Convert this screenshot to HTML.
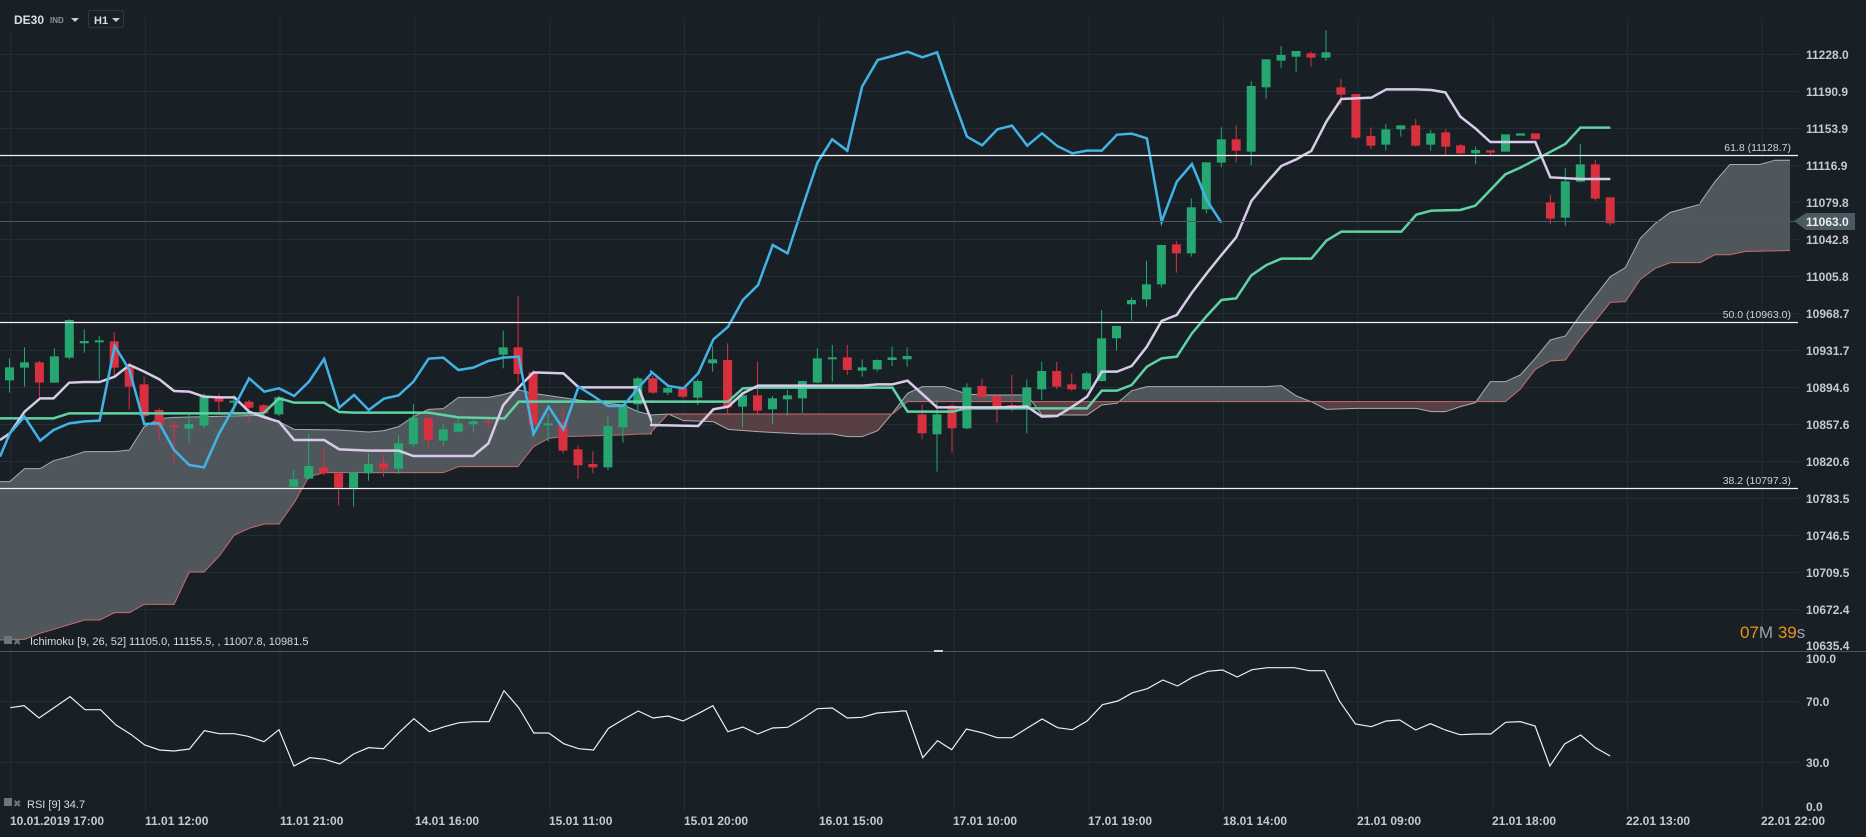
<!DOCTYPE html>
<html><head><meta charset="utf-8"><style>
html,body{margin:0;padding:0;background:#182026;overflow:hidden}
svg{display:block}
text{font-family:"Liberation Sans",sans-serif}
.ax{fill:#c5cacd;font-size:12px;font-weight:bold}
.tm{fill:#c5cacd;font-size:12px;font-weight:bold}
.ns{vector-effect:non-scaling-stroke;fill:none}
</style></head><body>
<svg width="1866" height="837" xmlns="http://www.w3.org/2000/svg">
<defs>
<clipPath id="c3"><rect x="0" y="0" width="652" height="652"/></clipPath>
<clipPath id="c4"><rect x="650" y="0" width="652" height="652"/></clipPath>
<clipPath id="c5"><rect x="1300" y="0" width="400" height="652"/></clipPath>
<clipPath id="c1"><rect x="1700" y="0" width="92" height="652"/></clipPath>
<clipPath id="main"><rect x="0" y="0" width="1866" height="651"/></clipPath>
<!-- zoom3 clips -->
<clipPath id="b3"><polygon points="0,605 22,605 55,566 90,566 120,542 155,530 190,515 257,515 290,510 323,440 357,416 390,412 590,406 625,425 659,448 760,450 826,456 860,452 893,440 926,410 960,388 993,386 1027,352 1094,352 1127,344 1162,330 1195,340 1296,360 1396,375 1430,395 1464,407 1497,403 1530,425 1568,425 1568,1300 0,1300"/></clipPath>
<clipPath id="a3"><polygon points="0,605 22,605 55,566 90,566 120,542 155,530 190,515 257,515 290,510 323,440 357,416 390,412 590,406 625,425 659,448 760,450 826,456 860,452 893,440 926,410 960,388 993,386 1027,352 1094,352 1127,344 1162,330 1195,340 1296,360 1396,375 1430,395 1464,407 1497,403 1530,425 1568,425 1568,-900 0,-900"/></clipPath>
<clipPath id="b4"><polygon points="0,1185 41,1182 75,1202 142,1205 175,1228 242,1235 342,1242 408,1242 442,1250 475,1250 510,1232 543,1180 577,1120 610,1100 660,1100 710,1122 744,1125 845,1125 878,1185 979,1185 1012,1155 1046,1150 1079,1112 1113,1100 1380,1100 1414,1097 1448,1128 1481,1145 1515,1168 1568,1168 1568,2100 0,2100"/></clipPath>
<clipPath id="a4"><polygon points="0,1185 41,1182 75,1202 142,1205 175,1228 242,1235 342,1242 408,1242 442,1250 475,1250 510,1232 543,1180 577,1120 610,1100 660,1100 710,1122 744,1125 845,1125 878,1185 979,1185 1012,1155 1046,1150 1079,1112 1113,1100 1380,1100 1414,1097 1448,1128 1481,1145 1515,1168 1568,1168 1568,-100 0,-100"/></clipPath>
<clipPath id="b5"><polygon points="0,1100 154,1100 199,1097 244,1097 289,1128 334,1145 379,1168 469,1165 649,1165 694,1175 736,1175 781,1160 826,1148 871,1085 916,1085 961,1065 1006,1015 1051,960 1096,948 1141,885 1186,828 1231,770 1276,743 1321,655 1366,610 1411,577 1500,553 1500,2100 0,2100"/></clipPath>
<clipPath id="a5"><polygon points="0,1100 154,1100 199,1097 244,1097 289,1128 334,1145 379,1168 469,1165 649,1165 694,1175 736,1175 781,1160 826,1148 871,1085 916,1085 961,1065 1006,1015 1051,960 1096,948 1141,885 1186,828 1231,770 1276,743 1321,655 1366,610 1411,577 1500,553 1500,-100 0,-100"/></clipPath>
</defs>

<!-- grid -->
<g stroke="#222d34" stroke-width="1">
<line x1="0" y1="54.5" x2="1798" y2="54.5"/><line x1="0" y1="91.5" x2="1798" y2="91.5"/><line x1="0" y1="128.5" x2="1798" y2="128.5"/><line x1="0" y1="165.5" x2="1798" y2="165.5"/><line x1="0" y1="202.5" x2="1798" y2="202.5"/><line x1="0" y1="239.5" x2="1798" y2="239.5"/><line x1="0" y1="276.5" x2="1798" y2="276.5"/><line x1="0" y1="313.5" x2="1798" y2="313.5"/><line x1="0" y1="350.5" x2="1798" y2="350.5"/><line x1="0" y1="387.5" x2="1798" y2="387.5"/><line x1="0" y1="424.5" x2="1798" y2="424.5"/><line x1="0" y1="461.5" x2="1798" y2="461.5"/><line x1="0" y1="498.5" x2="1798" y2="498.5"/><line x1="0" y1="535.5" x2="1798" y2="535.5"/><line x1="0" y1="572.5" x2="1798" y2="572.5"/><line x1="0" y1="609.5" x2="1798" y2="609.5"/>
<line x1="0" y1="701.5" x2="1798" y2="701.5"/><line x1="0" y1="762.5" x2="1798" y2="762.5"/>
<line x1="11" y1="32" x2="11" y2="812"/><line x1="145.5" y1="18" x2="145.5" y2="812"/><line x1="280" y1="18" x2="280" y2="812"/><line x1="415" y1="18" x2="415" y2="812"/><line x1="550" y1="18" x2="550" y2="812"/><line x1="684.5" y1="18" x2="684.5" y2="812"/><line x1="819" y1="18" x2="819" y2="812"/><line x1="954" y1="18" x2="954" y2="812"/><line x1="1089" y1="18" x2="1089" y2="812"/><line x1="1223.5" y1="18" x2="1223.5" y2="812"/><line x1="1358" y1="18" x2="1358" y2="812"/><line x1="1493" y1="18" x2="1493" y2="812"/><line x1="1627.5" y1="18" x2="1627.5" y2="812"/><line x1="1762" y1="18" x2="1762" y2="812"/>
</g>

<!-- cloud -->
<g clip-path="url(#main)">
<g clip-path="url(#c3)"><g transform="translate(0,280) scale(0.44643,0.33333)">
<polygon clip-path="url(#b3)" fill="#4f575d" points="0,1080 55,1078 90,1060 120,1048 190,1020 223,1020 257,998 290,998 323,973 390,973 424,876 457,876 491,828 525,765 558,745 592,732 625,732 659,668 692,590 726,578 993,578 1027,560 1160,560 1195,500 1229,475 1262,470 1396,465 1430,462 1464,462 1497,400 1568,400 1568,-900 0,-900"/>
<polygon clip-path="url(#a3)" fill="#573f44" points="0,1080 55,1078 90,1060 120,1048 190,1020 223,1020 257,998 290,998 323,973 390,973 424,876 457,876 491,828 525,765 558,745 592,732 625,732 659,668 692,590 726,578 993,578 1027,560 1160,560 1195,500 1229,475 1262,470 1396,465 1430,462 1464,462 1497,400 1568,400 1568,1300 0,1300"/>
<polyline class="ns" stroke="#a9aeb1" stroke-width="1" points="0,605 22,605 55,566 90,566 120,542 155,530 190,515 257,515 290,510 323,440 357,416 390,412 590,406 625,425 659,448 760,450 826,456 860,452 893,440 926,410 960,388 993,386 1027,352 1094,352 1127,344 1162,330 1195,340 1296,360 1396,375 1430,395 1464,407 1497,403 1530,425 1568,425"/>
<polyline class="ns" stroke="#c56d6d" stroke-width="1" points="0,1080 55,1078 90,1060 120,1048 190,1020 223,1020 257,998 290,998 323,973 390,973 424,876 457,876 491,828 525,765 558,745 592,732 625,732 659,668 692,590 726,578 993,578 1027,560 1160,560 1195,500 1229,475 1262,470 1396,465 1430,462 1464,462 1497,400 1568,400"/>
</g></g>
<g clip-path="url(#c4)"><g transform="translate(650,20) scale(0.44643,0.33333)">
<polygon clip-path="url(#b4)" fill="#4f575d" points="0,1240 41,1182 543,1182 577,1145 1568,1145 1568,-100 0,-100"/>
<polygon clip-path="url(#a4)" fill="#573f44" points="0,1240 41,1182 543,1182 577,1145 1568,1145 1568,2100 0,2100"/>
<polyline class="ns" stroke="#a9aeb1" stroke-width="1" points="0,1185 41,1182 75,1202 142,1205 175,1228 242,1235 342,1242 408,1242 442,1250 475,1250 510,1232 543,1180 577,1120 610,1100 660,1100 710,1122 744,1125 845,1125 878,1185 979,1185 1012,1155 1046,1150 1079,1112 1113,1100 1380,1100 1414,1097 1448,1128 1481,1145 1515,1168 1568,1168"/>
<polyline class="ns" stroke="#c56d6d" stroke-width="1" points="0,1240 41,1182 543,1182 577,1145 1568,1145"/>
</g></g>
<g clip-path="url(#c5)"><g transform="translate(1200,20) scale(0.33333,0.33333)">
<polygon clip-path="url(#b5)" fill="#4f575d" points="0,1145 916,1145 961,1107 1006,1048 1051,1023 1096,1020 1141,958 1186,903 1231,847 1276,845 1321,778 1366,745 1411,728 1500,728 1500,-100 0,-100"/>
<polygon clip-path="url(#a5)" fill="#573f44" points="0,1145 916,1145 961,1107 1006,1048 1051,1023 1096,1020 1141,958 1186,903 1231,847 1276,845 1321,778 1366,745 1411,728 1500,728 1500,2100 0,2100"/>
<polyline class="ns" stroke="#a9aeb1" stroke-width="1" points="0,1100 154,1100 199,1097 244,1097 289,1128 334,1145 379,1168 469,1165 649,1165 694,1175 736,1175 781,1160 826,1148 871,1085 916,1085 961,1065 1006,1015 1051,960 1096,948 1141,885 1186,828 1231,770 1276,743 1321,655 1366,610 1411,577 1500,553"/>
<polyline class="ns" stroke="#c56d6d" stroke-width="1" points="0,1145 916,1145 961,1107 1006,1048 1051,1023 1096,1020 1141,958 1186,903 1231,847 1276,845 1321,778 1366,745 1411,728 1500,728"/>
</g></g>
<g clip-path="url(#c1)"><g transform="translate(1600,0) scale(0.33333,0.534)">
<polygon fill="#4f575d" points="0,545 37,515 75,500 120,447 165,418 210,398 255,390 298,382 345,340 390,308 480,308 525,300 570,300 570,469 435,471 390,477 345,477 300,492 210,492 165,502 120,524 75,566 37,566 0,592"/>
<polyline class="ns" stroke="#a9aeb1" stroke-width="1" points="0,545 37,515 75,500 120,447 165,418 210,398 255,390 298,382 345,340 390,308 480,308 525,300 570,300"/>
<polyline class="ns" stroke="#c56d6d" stroke-width="1" points="0,592 37,566 75,566 120,524 165,502 210,492 300,492 345,477 390,477 435,471 570,469"/>
</g></g>

<!-- candles group A (zoom3 y) -->
<g transform="translate(0,280) scale(1,0.33333)">
<g stroke-width="1" class="cg">
<line class="ns" stroke="#26a671" x1="9.5" y1="235" x2="9.5" y2="338"/><rect fill="#26a671" x="5" y="262" width="9" height="39"/>
<line class="ns" stroke="#26a671" x1="24.5" y1="202" x2="24.5" y2="320"/><rect fill="#26a671" x="20" y="247" width="9" height="16"/>
<line class="ns" stroke="#d9303f" x1="39.4" y1="243" x2="39.4" y2="352"/><rect fill="#d9303f" x="34.9" y="247" width="9" height="61"/>
<line class="ns" stroke="#26a671" x1="54.4" y1="205" x2="54.4" y2="308"/><rect fill="#26a671" x="49.9" y="229" width="9" height="79"/>
<line class="ns" stroke="#26a671" x1="69.3" y1="118" x2="69.3" y2="238"/><rect fill="#26a671" x="64.8" y="120" width="9" height="113"/>
<line class="ns" stroke="#26a671" x1="84.3" y1="148" x2="84.3" y2="218"/><rect fill="#26a671" x="79.8" y="183" width="9" height="7"/>
<line class="ns" stroke="#26a671" x1="99.3" y1="168" x2="99.3" y2="298"/><rect fill="#26a671" x="94.8" y="181" width="9" height="6"/>
<line class="ns" stroke="#d9303f" x1="114.2" y1="156" x2="114.2" y2="290"/><rect fill="#d9303f" x="109.7" y="184" width="9" height="79"/>
<line class="ns" stroke="#d9303f" x1="129.2" y1="248" x2="129.2" y2="388"/><rect fill="#d9303f" x="124.7" y="262" width="9" height="58"/>
<line class="ns" stroke="#d9303f" x1="144.1" y1="290" x2="144.1" y2="415"/><rect fill="#d9303f" x="139.6" y="313" width="9" height="95"/>
<line class="ns" stroke="#d9303f" x1="159.1" y1="385" x2="159.1" y2="480"/><rect fill="#d9303f" x="154.6" y="390" width="9" height="47"/>
<line class="ns" stroke="#d9303f" x1="174.1" y1="425" x2="174.1" y2="550"/><rect fill="#d9303f" x="169.6" y="436" width="9" height="6"/>
<line class="ns" stroke="#26a671" x1="189" y1="398" x2="189" y2="490"/><rect fill="#26a671" x="184.5" y="432" width="9" height="14"/>
<line class="ns" stroke="#26a671" x1="204" y1="340" x2="204" y2="445"/><rect fill="#26a671" x="199.5" y="350" width="9" height="87"/>
<line class="ns" stroke="#d9303f" x1="218.9" y1="340" x2="218.9" y2="395"/><rect fill="#d9303f" x="214.4" y="355" width="9" height="10"/>
<line class="ns" stroke="#26a671" x1="233.9" y1="345" x2="233.9" y2="400"/><rect fill="#26a671" x="229.4" y="362" width="9" height="6"/>
<line class="ns" stroke="#d9303f" x1="248.9" y1="360" x2="248.9" y2="428"/><rect fill="#d9303f" x="244.4" y="365" width="9" height="18"/>
<line class="ns" stroke="#d9303f" x1="263.8" y1="372" x2="263.8" y2="402"/><rect fill="#d9303f" x="259.3" y="376" width="9" height="24"/>
<line class="ns" stroke="#26a671" x1="278.8" y1="348" x2="278.8" y2="408"/><rect fill="#26a671" x="274.3" y="352" width="9" height="51"/>
<line class="ns" stroke="#26a671" x1="293.7" y1="570" x2="293.7" y2="620"/><rect fill="#26a671" x="289.2" y="598" width="9" height="22"/>
<line class="ns" stroke="#26a671" x1="308.7" y1="462" x2="308.7" y2="598"/><rect fill="#26a671" x="304.2" y="558" width="9" height="38"/>
<line class="ns" stroke="#d9303f" x1="323.7" y1="505" x2="323.7" y2="585"/><rect fill="#d9303f" x="319.2" y="562" width="9" height="18"/>
<line class="ns" stroke="#d9303f" x1="338.6" y1="576" x2="338.6" y2="675"/><rect fill="#d9303f" x="334.1" y="580" width="9" height="43"/>
<line class="ns" stroke="#26a671" x1="353.6" y1="575" x2="353.6" y2="680"/><rect fill="#26a671" x="349.1" y="577" width="9" height="46"/>
<line class="ns" stroke="#26a671" x1="368.5" y1="520" x2="368.5" y2="602"/><rect fill="#26a671" x="364" y="552" width="9" height="28"/>
<line class="ns" stroke="#d9303f" x1="383.5" y1="522" x2="383.5" y2="590"/><rect fill="#d9303f" x="379" y="550" width="9" height="16"/>
<line class="ns" stroke="#26a671" x1="398.5" y1="465" x2="398.5" y2="582"/><rect fill="#26a671" x="394" y="490" width="9" height="76"/>
<line class="ns" stroke="#26a671" x1="413.4" y1="372" x2="413.4" y2="500"/><rect fill="#26a671" x="408.9" y="413" width="9" height="80"/>
<line class="ns" stroke="#d9303f" x1="428.4" y1="400" x2="428.4" y2="505"/><rect fill="#d9303f" x="423.9" y="414" width="9" height="66"/>
<line class="ns" stroke="#26a671" x1="443.3" y1="432" x2="443.3" y2="498"/><rect fill="#26a671" x="438.8" y="448" width="9" height="34"/>
<line class="ns" stroke="#26a671" x1="458.3" y1="418" x2="458.3" y2="458"/><rect fill="#26a671" x="453.8" y="430" width="9" height="25"/>
<line class="ns" stroke="#26a671" x1="473.3" y1="418" x2="473.3" y2="458"/><rect fill="#26a671" x="468.8" y="424" width="9" height="9"/>
<line class="ns" stroke="#d9303f" x1="488.2" y1="405" x2="488.2" y2="450"/><rect fill="#d9303f" x="483.7" y="424" width="9" height="4"/>
<line class="ns" stroke="#26a671" x1="503.2" y1="152" x2="503.2" y2="265"/><rect fill="#26a671" x="498.7" y="202" width="9" height="22"/>
<line class="ns" stroke="#d9303f" x1="518.1" y1="48" x2="518.1" y2="310"/><rect fill="#d9303f" x="513.6" y="202" width="9" height="80"/>
<line class="ns" stroke="#d9303f" x1="533.1" y1="270" x2="533.1" y2="436"/><rect fill="#d9303f" x="528.6" y="277" width="9" height="157"/>
<line class="ns" stroke="#26a671" x1="548.1" y1="400" x2="548.1" y2="485"/><rect fill="#26a671" x="543.6" y="430" width="9" height="6"/>
<line class="ns" stroke="#d9303f" x1="563" y1="380" x2="563" y2="520"/><rect fill="#d9303f" x="558.5" y="427" width="9" height="85"/>
<line class="ns" stroke="#d9303f" x1="578" y1="495" x2="578" y2="597"/><rect fill="#d9303f" x="573.5" y="508" width="9" height="48"/>
<line class="ns" stroke="#d9303f" x1="592.9" y1="514" x2="592.9" y2="580"/><rect fill="#d9303f" x="588.4" y="552" width="9" height="10"/>
<line class="ns" stroke="#26a671" x1="607.9" y1="408" x2="607.9" y2="570"/><rect fill="#26a671" x="603.4" y="438" width="9" height="124"/>
<line class="ns" stroke="#26a671" x1="622.9" y1="370" x2="622.9" y2="488"/><rect fill="#26a671" x="618.4" y="375" width="9" height="67"/>
<line class="ns" stroke="#26a671" x1="637.8" y1="290" x2="637.8" y2="400"/><rect fill="#26a671" x="633.3" y="295" width="9" height="78"/>
</g></g>

<!-- candles group B (zoom4/5 y) -->
<g transform="translate(0,20) scale(1,0.33333)">
<line class="ns" stroke="#d9303f" x1="652.8" y1="1068" x2="652.8" y2="1122"/><rect fill="#d9303f" x="648.3" y="1075" width="9" height="43"/>
<line class="ns" stroke="#26a671" x1="667.7" y1="1100" x2="667.7" y2="1125"/><rect fill="#26a671" x="663.2" y="1104" width="9" height="14"/>
<line class="ns" stroke="#d9303f" x1="682.7" y1="1100" x2="682.7" y2="1135"/><rect fill="#d9303f" x="678.2" y="1104" width="9" height="26"/>
<line class="ns" stroke="#26a671" x1="697.7" y1="1078" x2="697.7" y2="1155"/><rect fill="#26a671" x="693.2" y="1083" width="9" height="50"/>
<line class="ns" stroke="#26a671" x1="712.6" y1="978" x2="712.6" y2="1055"/><rect fill="#26a671" x="708.1" y="1018" width="9" height="12"/>
<line class="ns" stroke="#d9303f" x1="727.6" y1="970" x2="727.6" y2="1185"/><rect fill="#d9303f" x="723.1" y="1020" width="9" height="142"/>
<line class="ns" stroke="#26a671" x1="742.5" y1="1123" x2="742.5" y2="1222"/><rect fill="#26a671" x="738" y="1126" width="9" height="34"/>
<line class="ns" stroke="#d9303f" x1="757.5" y1="1025" x2="757.5" y2="1180"/><rect fill="#d9303f" x="753" y="1126" width="9" height="46"/>
<line class="ns" stroke="#26a671" x1="772.5" y1="1128" x2="772.5" y2="1213"/><rect fill="#26a671" x="768" y="1135" width="9" height="33"/>
<line class="ns" stroke="#26a671" x1="787.4" y1="1110" x2="787.4" y2="1187"/><rect fill="#26a671" x="782.9" y="1126" width="9" height="12"/>
<line class="ns" stroke="#26a671" x1="802.4" y1="1083" x2="802.4" y2="1178"/><rect fill="#26a671" x="797.9" y="1083" width="9" height="52"/>
<line class="ns" stroke="#26a671" x1="817.3" y1="985" x2="817.3" y2="1090"/><rect fill="#26a671" x="812.8" y="1015" width="9" height="73"/>
<line class="ns" stroke="#26a671" x1="832.3" y1="975" x2="832.3" y2="1085"/><rect fill="#26a671" x="827.8" y="1012" width="9" height="6"/>
<line class="ns" stroke="#d9303f" x1="847.3" y1="975" x2="847.3" y2="1065"/><rect fill="#d9303f" x="842.8" y="1012" width="9" height="38"/>
<line class="ns" stroke="#26a671" x1="862.2" y1="1018" x2="862.2" y2="1070"/><rect fill="#26a671" x="857.7" y="1042" width="9" height="10"/>
<line class="ns" stroke="#26a671" x1="877.2" y1="1018" x2="877.2" y2="1055"/><rect fill="#26a671" x="872.7" y="1020" width="9" height="28"/>
<line class="ns" stroke="#26a671" x1="892.1" y1="980" x2="892.1" y2="1038"/><rect fill="#26a671" x="887.6" y="1012" width="9" height="8"/>
<line class="ns" stroke="#26a671" x1="907.1" y1="982" x2="907.1" y2="1040"/><rect fill="#26a671" x="902.6" y="1008" width="9" height="10"/>
<line class="ns" stroke="#d9303f" x1="922.1" y1="1153" x2="922.1" y2="1258"/><rect fill="#d9303f" x="917.6" y="1183" width="9" height="57"/>
<line class="ns" stroke="#26a671" x1="937" y1="1140" x2="937" y2="1355"/><rect fill="#26a671" x="932.5" y="1183" width="9" height="60"/>
<line class="ns" stroke="#d9303f" x1="952" y1="1152" x2="952" y2="1298"/><rect fill="#d9303f" x="947.5" y="1157" width="9" height="68"/>
<line class="ns" stroke="#26a671" x1="966.9" y1="1090" x2="966.9" y2="1228"/><rect fill="#26a671" x="962.4" y="1102" width="9" height="123"/>
<line class="ns" stroke="#d9303f" x1="981.9" y1="1078" x2="981.9" y2="1135"/><rect fill="#d9303f" x="977.4" y="1098" width="9" height="34"/>
<line class="ns" stroke="#d9303f" x1="996.9" y1="1125" x2="996.9" y2="1208"/><rect fill="#d9303f" x="992.4" y="1127" width="9" height="35"/>
<line class="ns" stroke="#d9303f" x1="1011.8" y1="1065" x2="1011.8" y2="1175"/><rect fill="#d9303f" x="1007.3" y="1155" width="9" height="7"/>
<line class="ns" stroke="#26a671" x1="1026.8" y1="1078" x2="1026.8" y2="1240"/><rect fill="#26a671" x="1022.3" y="1102" width="9" height="58"/>
<line class="ns" stroke="#26a671" x1="1041.7" y1="1025" x2="1041.7" y2="1140"/><rect fill="#26a671" x="1037.2" y="1053" width="9" height="55"/>
<line class="ns" stroke="#d9303f" x1="1056.7" y1="1025" x2="1056.7" y2="1108"/><rect fill="#d9303f" x="1052.2" y="1053" width="9" height="47"/>
<line class="ns" stroke="#d9303f" x1="1071.7" y1="1060" x2="1071.7" y2="1113"/><rect fill="#d9303f" x="1067.2" y="1093" width="9" height="15"/>
<line class="ns" stroke="#26a671" x1="1086.6" y1="1055" x2="1086.6" y2="1113"/><rect fill="#26a671" x="1082.1" y="1060" width="9" height="48"/>
<line class="ns" stroke="#26a671" x1="1101.6" y1="870" x2="1101.6" y2="1085"/><rect fill="#26a671" x="1097.1" y="955" width="9" height="128"/>
<line class="ns" stroke="#26a671" x1="1116.5" y1="918" x2="1116.5" y2="992"/><rect fill="#26a671" x="1112" y="918" width="9" height="37"/>
<line class="ns" stroke="#26a671" x1="1131.5" y1="833" x2="1131.5" y2="902"/><rect fill="#26a671" x="1127" y="840" width="9" height="13"/>
<line class="ns" stroke="#26a671" x1="1146.5" y1="722" x2="1146.5" y2="860"/><rect fill="#26a671" x="1142" y="793" width="9" height="45"/>
<line class="ns" stroke="#26a671" x1="1161.4" y1="675" x2="1161.4" y2="802"/><rect fill="#26a671" x="1156.9" y="675" width="9" height="118"/>
<line class="ns" stroke="#d9303f" x1="1176.4" y1="663" x2="1176.4" y2="758"/><rect fill="#d9303f" x="1171.9" y="673" width="9" height="27"/>
<line class="ns" stroke="#26a671" x1="1191.3" y1="535" x2="1191.3" y2="710"/><rect fill="#26a671" x="1186.8" y="562" width="9" height="138"/>
<line class="ns" stroke="#26a671" x1="1206.3" y1="427" x2="1206.3" y2="580"/><rect fill="#26a671" x="1201.8" y="427" width="9" height="141"/>
<line class="ns" stroke="#26a671" x1="1221.3" y1="322" x2="1221.3" y2="442"/><rect fill="#26a671" x="1216.8" y="358" width="9" height="70"/>
<line class="ns" stroke="#d9303f" x1="1236.2" y1="315" x2="1236.2" y2="428"/><rect fill="#d9303f" x="1231.7" y="358" width="9" height="34"/>
<line class="ns" stroke="#26a671" x1="1251.2" y1="183" x2="1251.2" y2="436"/><rect fill="#26a671" x="1246.7" y="198" width="9" height="197"/>
<line class="ns" stroke="#26a671" x1="1266.1" y1="117" x2="1266.1" y2="236"/><rect fill="#26a671" x="1261.6" y="118" width="9" height="84"/>
<line class="ns" stroke="#26a671" x1="1281.1" y1="78" x2="1281.1" y2="143"/><rect fill="#26a671" x="1276.6" y="105" width="9" height="17"/>
<line class="ns" stroke="#26a671" x1="1296.1" y1="93" x2="1296.1" y2="155"/><rect fill="#26a671" x="1291.6" y="93" width="9" height="17"/>
<line class="ns" stroke="#d9303f" x1="1311" y1="95" x2="1311" y2="140"/><rect fill="#d9303f" x="1306.5" y="100" width="9" height="13"/>
<line class="ns" stroke="#26a671" x1="1326" y1="30" x2="1326" y2="122"/><rect fill="#26a671" x="1321.5" y="97" width="9" height="16"/>
<line class="ns" stroke="#d9303f" x1="1340.9" y1="177" x2="1340.9" y2="255"/><rect fill="#d9303f" x="1336.4" y="202" width="9" height="22"/>
<line class="ns" stroke="#d9303f" x1="1355.9" y1="222" x2="1355.9" y2="357"/><rect fill="#d9303f" x="1351.4" y="222" width="9" height="131"/>
<line class="ns" stroke="#d9303f" x1="1370.9" y1="322" x2="1370.9" y2="387"/><rect fill="#d9303f" x="1366.4" y="348" width="9" height="29"/>
<line class="ns" stroke="#26a671" x1="1385.8" y1="312" x2="1385.8" y2="392"/><rect fill="#26a671" x="1381.3" y="328" width="9" height="46"/>
<line class="ns" stroke="#26a671" x1="1400.8" y1="316" x2="1400.8" y2="350"/><rect fill="#26a671" x="1396.3" y="316" width="9" height="12"/>
<line class="ns" stroke="#d9303f" x1="1415.7" y1="297" x2="1415.7" y2="380"/><rect fill="#d9303f" x="1411.2" y="316" width="9" height="61"/>
<line class="ns" stroke="#26a671" x1="1430.7" y1="330" x2="1430.7" y2="392"/><rect fill="#26a671" x="1426.2" y="340" width="9" height="34"/>
<line class="ns" stroke="#d9303f" x1="1445.7" y1="327" x2="1445.7" y2="405"/><rect fill="#d9303f" x="1441.2" y="337" width="9" height="43"/>
<line class="ns" stroke="#d9303f" x1="1460.6" y1="372" x2="1460.6" y2="402"/><rect fill="#d9303f" x="1456.1" y="376" width="9" height="24"/>
<line class="ns" stroke="#26a671" x1="1475.6" y1="380" x2="1475.6" y2="432"/><rect fill="#26a671" x="1471.1" y="390" width="9" height="10"/>
<line class="ns" stroke="#d9303f" x1="1490.5" y1="391" x2="1490.5" y2="405"/><rect fill="#d9303f" x="1486" y="391" width="9" height="7"/>
<rect fill="#26a671" x="1501" y="343" width="9" height="52"/>
<rect fill="#26a671" x="1516" y="340" width="9" height="7"/>
<rect fill="#d9303f" x="1530.9" y="340" width="9" height="18"/>
<line class="ns" stroke="#d9303f" x1="1550.4" y1="525" x2="1550.4" y2="612"/><rect fill="#d9303f" x="1545.9" y="547" width="9" height="49"/>
<line class="ns" stroke="#26a671" x1="1565.3" y1="444" x2="1565.3" y2="618"/><rect fill="#26a671" x="1560.8" y="484" width="9" height="109"/>
<line class="ns" stroke="#26a671" x1="1580.3" y1="372" x2="1580.3" y2="487"/><rect fill="#26a671" x="1575.8" y="433" width="9" height="52"/>
<line class="ns" stroke="#d9303f" x1="1595.3" y1="420" x2="1595.3" y2="542"/><rect fill="#d9303f" x="1590.8" y="433" width="9" height="103"/>
<line class="ns" stroke="#d9303f" x1="1610.2" y1="532" x2="1610.2" y2="617"/><rect fill="#d9303f" x="1605.7" y="532" width="9" height="78"/>
</g>

<!-- indicator lines -->
<g clip-path="url(#c3)"><g transform="translate(0,280) scale(0.44643,0.33333)">
<polyline class="ns" stroke="#5fd3a5" stroke-width="2.5" points="0,415 120,415 155,400 590,400 625,355 659,368 726,368 760,396 793,398 960,398 1027,412 1130,415 1162,365 1568,365"/>
<polyline class="ns" stroke="#d7cbe8" stroke-width="2.5" points="0,480 22,460 55,395 90,355 120,355 155,308 190,306 223,306 257,290 290,255 323,275 357,298 390,333 424,335 457,350 491,352 525,352 558,395 592,412 625,425 659,480 692,480 726,480 760,508 793,510 826,512 893,512 926,528 960,528 1060,528 1094,490 1127,376 1162,322 1195,277 1262,280 1296,322 1430,322 1464,438 1568,438"/>
<polyline class="ns" stroke="#42b3e6" stroke-width="2.5" points="0,530 22,460 55,410 90,482 120,450 155,430 190,424 223,422 257,198 290,270 323,432 357,430 390,510 424,555 457,562 491,460 525,380 558,295 592,335 625,325 659,348 692,305 726,237 760,383 793,345 826,390 860,356 893,346 926,305 960,236 993,233 1027,270 1060,263 1094,243 1127,233 1162,230 1195,462 1229,380 1262,448 1296,320 1329,348 1362,378 1396,378 1430,323 1464,273 1497,318 1530,325 1568,280"/>
</g></g>
<g clip-path="url(#c4)"><g transform="translate(650,20) scale(0.44643,0.33333)">
<polyline class="ns" stroke="#5fd3a5" stroke-width="2.5" points="0,1145 175,1145 208,1105 242,1103 543,1103 577,1175 676,1175 710,1165 979,1165 1012,1112 1046,1112 1079,1095 1113,1040 1146,1015 1180,1010 1214,940 1247,888 1280,840 1313,835 1347,766 1381,735 1414,716 1481,716 1515,660 1548,635 1568,635"/>
<polyline class="ns" stroke="#d7cbe8" stroke-width="2.5" points="0,1215 108,1218 142,1168 175,1160 208,1120 242,1097 475,1097 510,1093 543,1093 577,1082 643,1162 777,1162 845,1160 878,1190 912,1188 946,1160 979,1130 1012,1055 1046,1055 1079,1038 1113,980 1146,903 1180,885 1214,818 1247,760 1280,705 1313,652 1347,543 1381,488 1414,438 1448,418 1481,392 1515,305 1548,236 1568,234"/>
<polyline class="ns" stroke="#42b3e6" stroke-width="2.5" points="0,1052 41,1098 75,1105 108,1060 142,958 175,920 208,840 242,795 275,675 308,700 342,560 375,428 408,358 442,392 475,200 510,120 543,108 577,95 610,112 643,97 676,225 710,350 744,376 778,328 811,317 845,377 878,340 912,378 946,400 979,392 1012,392 1046,344 1079,341 1113,355 1146,605 1180,485 1214,432 1247,540 1280,608"/>
</g></g>
<g clip-path="url(#c5)"><g transform="translate(1200,20) scale(0.33333,0.33333)">
<polyline class="ns" stroke="#5fd3a5" stroke-width="2.5" points="0,915 64,838 109,834 154,768 199,738 244,716 334,716 379,662 424,635 604,635 649,584 694,572 781,570 826,557 871,510 916,463 961,443 1096,372 1141,323 1231,323"/>
<polyline class="ns" stroke="#d7cbe8" stroke-width="2.5" points="0,800 64,700 109,655 154,542 199,488 244,440 334,393 379,305 424,237 514,233 559,208 649,208 694,210 736,217 781,290 826,325 871,366 1006,366 1051,472 1141,477 1231,477"/>
</g></g>
</g>

<!-- fib & price lines -->
<line x1="0" y1="155.5" x2="1798" y2="155.5" stroke="#f2f2f2" stroke-width="1.3"/>
<line x1="0" y1="322.5" x2="1798" y2="322.5" stroke="#f2f2f2" stroke-width="1.3"/>
<line x1="0" y1="488.5" x2="1798" y2="488.5" stroke="#f2f2f2" stroke-width="1.3"/>
<line x1="0" y1="221.5" x2="1795" y2="221.5" stroke="#4b5962" stroke-width="1"/>
<g fill="#d2d2d2" font-size="10.5" text-anchor="end">
<text x="1791" y="151">61.8 (11128.7)</text>
<text x="1791" y="318">50.0 (10963.0)</text>
<text x="1791" y="484">38.2 (10797.3)</text>
</g>

<!-- separator -->
<line x1="0" y1="651.5" x2="1866" y2="651.5" stroke="#4a555c" stroke-width="1"/>
<rect x="934" y="650" width="9" height="2" fill="#cfd3d6"/>

<!-- RSI -->
<g transform="translate(0,640) scale(0.574,0.33333)"><polyline class="ns" stroke="#eef0f1" stroke-width="1.2" points="18,203 42,197 68,234 95,202 122,170 148,209 175,209 202,255 228,283 252,315 278,330 303,333 330,327 356,272 382,281 408,281 432,289 460,305 486,269 512,378 540,353 566,358 592,372 616,342 642,323 668,326 695,278 721,236 748,275 774,260 800,248 826,245 852,245 878,152 904,204 930,279 956,279 982,311 1008,326 1034,330 1060,265 1086,238 1112,213 1138,234 1164,228 1190,243 1216,221 1242,197 1268,275 1294,261 1320,282 1346,264 1372,262 1398,236 1424,206 1450,204 1476,234 1502,232 1528,219 1568,214"/></g>
<g transform="translate(900,640) scale(0.6154,0.33333)"><polyline class="ns" stroke="#eef0f1" stroke-width="1.2" points="0,213 10,213 37,353 61,302 84,329 108,267 133,278 158,293 182,293 207,264 231,237 256,263 280,269 304,243 329,194 354,183 378,158 402,146 427,120 451,138 475,112 500,94 524,90 548,111 572,89 597,83 641,83 665,92 690,92 714,183 740,252 766,260 790,243 812,240 838,270 862,251 886,270 910,284 936,282 960,282 984,247 1008,245 1032,258 1056,378 1080,312 1106,285 1130,323 1154,348"/></g>

<!-- price axis -->
<g class="ax">
<text x="1806" y="59">11228.0</text><text x="1806" y="96">11190.9</text><text x="1806" y="133">11153.9</text><text x="1806" y="170">11116.9</text><text x="1806" y="207">11079.8</text><text x="1806" y="244">11042.8</text><text x="1806" y="281">11005.8</text><text x="1806" y="318">10968.7</text><text x="1806" y="355">10931.7</text><text x="1806" y="392">10894.6</text><text x="1806" y="429">10857.6</text><text x="1806" y="466">10820.6</text><text x="1806" y="503">10783.5</text><text x="1806" y="540">10746.5</text><text x="1806" y="577">10709.5</text><text x="1806" y="614">10672.4</text><text x="1806" y="650">10635.4</text>
<text x="1806" y="663">100.0</text><text x="1806" y="706">70.0</text><text x="1806" y="767">30.0</text><text x="1806" y="811">0.0</text>
</g>
<polygon points="1794,221 1806,213 1855,213 1855,230 1806,230" fill="#4b5962"/>
<text x="1806" y="226" class="ax" fill="#e6e9eb" style="fill:#e9ecee">11063.0</text>

<!-- timer -->
<text x="1740" y="638" font-size="17"><tspan fill="#f0901a">07</tspan><tspan fill="#9aa2a8">M</tspan><tspan fill="#f0901a"> 39</tspan><tspan fill="#9aa2a8">s</tspan></text>

<!-- time axis -->
<g class="tm">
<text x="10" y="825">10.01.2019  17:00</text><text x="145" y="825">11.01  12:00</text><text x="280" y="825">11.01  21:00</text><text x="415" y="825">14.01  16:00</text><text x="549" y="825">15.01  11:00</text><text x="684" y="825">15.01  20:00</text><text x="819" y="825">16.01  15:00</text><text x="953" y="825">17.01  10:00</text><text x="1088" y="825">17.01  19:00</text><text x="1223" y="825">18.01  14:00</text><text x="1357" y="825">21.01  09:00</text><text x="1492" y="825">21.01  18:00</text><text x="1626" y="825">22.01  13:00</text><text x="1761" y="825">22.01  22:00</text>
</g>

<!-- legends -->
<rect x="4" y="636" width="8" height="8" fill="#6c767c"/><text x="13" y="645" font-size="10" fill="#6c767c">✖</text>
<text x="30" y="645" font-size="11" fill="#dcdcdc">Ichimoku  [9, 26, 52]  11105.0,  11155.5,  , 11007.8,  10981.5</text>
<rect x="4" y="798" width="8" height="8" fill="#6c767c"/><text x="13" y="807" font-size="10" fill="#6c767c">✖</text>
<text x="27" y="808" font-size="11" fill="#dcdcdc">RSI [9]  34.7</text>

<!-- header -->
<text x="14" y="24" font-size="12" font-weight="bold" fill="#dcdfe1">DE30</text>
<text x="50" y="23" font-size="8" font-weight="bold" fill="#8a949a">IND</text>
<polygon points="71,18 79,18 75,22" fill="#c8cdd0"/>
<rect x="88.5" y="10.5" width="35" height="17" rx="2" fill="none" stroke="#2e3a42"/>
<text x="94" y="24" font-size="11" font-weight="bold" fill="#dcdfe1">H1</text>
<polygon points="112,18 120,18 116,22" fill="#c8cdd0"/>
</svg>
</body></html>
